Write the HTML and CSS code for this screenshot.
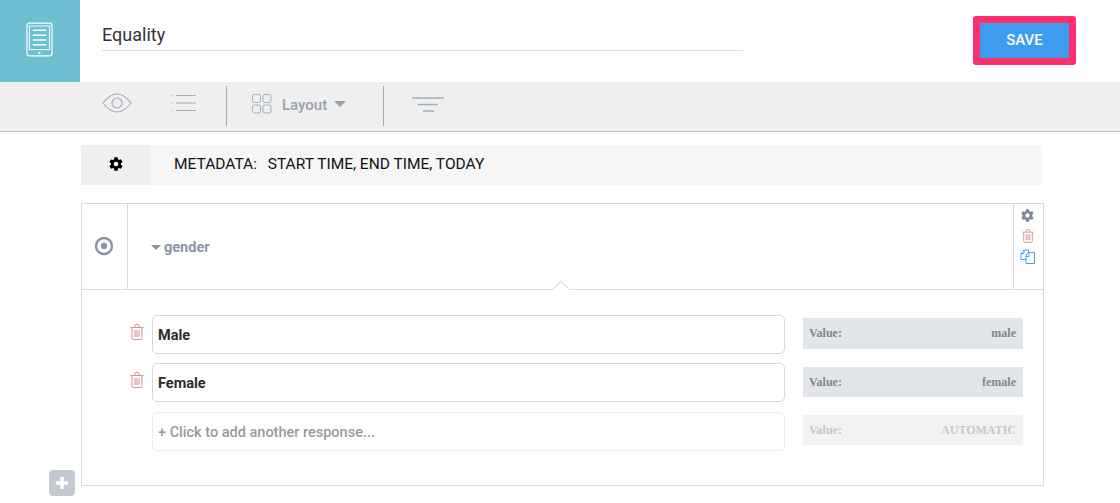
FILE: index.html
```html
<!DOCTYPE html>
<html lang="en">
<head>
  <meta charset="UTF-8">
  <title>Equality</title>
  <link rel="stylesheet" href="styles.css">
</head>
<body>

  <!-- Title bar -->
  <header class="topbar">
    <div class="form-icon">
      <svg width="27" height="35" viewBox="0 0 28 36" fill="none" stroke="#fff">
        <rect x="1" y="1" width="26" height="34" rx="2.5" stroke-width="1.2"/>
        <rect x="3.5" y="4" width="21" height="24.500" stroke-width="1"/>
        <path d="M7 8.500h14M7 13.500h14M7 18.500h14M7 23.500h14" stroke-width="1.600"/>
        <circle cx="14" cy="32" r="1.100" fill="#fff" stroke="none"/>
      </svg>
    </div>
    <div class="title-field">Equality</div>
    <button class="save-button">SAVE</button>
  </header>

  <!-- Toolbar -->
  <nav class="toolbar">
    <svg class="tool-eye" width="30" height="20" viewBox="0 0 30 20" fill="none" stroke="#a3adb6" stroke-width="1.2">
      <path d="M1 10C6 3.500 10 1 15 1s9 2.500 14 9c-5 6.500-9 9-14 9S6 16.500 1 10z"/>
      <circle cx="15" cy="10" r="5"/>
    </svg>
    <svg class="tool-list" width="25" height="18" viewBox="0 0 25 18" fill="none" stroke="#a3adb6">
      <path d="M5 1.500h20M5 9h20M5 16.500h20" stroke-width="1.200"/>
      <path d="M0.500 1.500h2M0.500 9h2M0.500 16.500h2" stroke="#c6ccd2" stroke-width="1.600"/>
    </svg>
    <span class="tool-sep"></span>
    <div class="tool-layout">
      <svg class="layout-icon" width="20" height="20" viewBox="0 0 20 20" fill="none" stroke="#a3adb6" stroke-width="1">
        <rect x="0.500" y="0.500" width="8" height="8" rx="2"/>
        <rect x="11" y="0.500" width="8" height="8" rx="2"/>
        <rect x="0.500" y="11" width="8" height="8" rx="2"/>
        <rect x="11" y="11" width="8" height="8" rx="2"/>
      </svg>
      <span class="layout-label">Layout</span>
      <span class="caret-down"></span>
    </div>
    <span class="tool-sep"></span>
    <svg class="tool-filter" width="32" height="15" viewBox="0 0 32 15" fill="none" stroke="#a3adb6" stroke-width="1.300">
      <path d="M0 1h32M6 7.500h20M11 14h11"/>
    </svg>
  </nav>

  <main class="content">

    <!-- Metadata -->
    <section class="metadata">
      <div class="metadata-icon">
        <svg width="16" height="16" viewBox="0 0 24 24"><use href="#gear"/></svg>
      </div>
      <div class="metadata-text">METADATA: <span class="metadata-fields">START TIME, END TIME, TODAY</span></div>
    </section>

    <!-- Question card -->
    <section class="question">
      <div class="question-head">
        <div class="question-type">
          <svg width="20" height="20" viewBox="0 0 20 20" fill="none">
            <circle cx="10" cy="10" r="8" stroke="#8794a2" stroke-width="2.400"/>
            <circle cx="10" cy="10" r="3.200" fill="#8794a2"/>
          </svg>
        </div>
        <div class="question-name">
          <span class="caret-small"></span>
          <span>gender</span>
        </div>
        <div class="question-actions">
          <svg width="15" height="15" viewBox="0 0 24 24" fill="#7d8893"><use href="#gear"/></svg>
          <svg width="12" height="14" viewBox="0 0 14 16"><use href="#trash"/></svg>
          <svg width="15" height="15" viewBox="0 0 15 15" fill="#fff" stroke="#4aa3ee" stroke-width="1">
            <path d="M1 4.500 4 1h4.500v9.500H1z"/>
            <path d="M6 5.500 8.500 3.500h6v11H6z"/>
            <path d="M1 4.500h3V1M6 7.500h3V4" fill="none"/>
          </svg>
        </div>
        <span class="head-notch"></span>
      </div>

      <div class="responses">
        <div class="response">
          <svg class="response-trash" width="14" height="16" viewBox="0 0 14 16"><use href="#trash"/></svg>
          <div class="response-input">Male</div>
          <div class="response-value"><span>Value:</span><span>male</span></div>
        </div>
        <div class="response">
          <svg class="response-trash" width="14" height="16" viewBox="0 0 14 16"><use href="#trash"/></svg>
          <div class="response-input">Female</div>
          <div class="response-value"><span>Value:</span><span>female</span></div>
        </div>
        <div class="response response-new">
          <div class="response-input">+ Click to add another response...</div>
          <div class="response-value"><span>Value:</span><span>AUTOMATIC</span></div>
        </div>
      </div>
    </section>
  </main>

  <button class="add-question">
    <svg width="14" height="14" viewBox="0 0 14 14"><path d="M7 1v12M1 7h12" stroke="#fff" stroke-width="3.400"/></svg>
  </button>

  <!-- Shared icons -->
  <svg class="icon-defs" width="0" height="0">
    <defs>
      <path id="gear" d="M19.400 13c.04-.33.06-.66.06-1s-.02-.67-.06-1l2.110-1.650a.5.500 0 0 0 .12-.64l-2-3.460a.5.500 0 0 0-.61-.22l-2.490 1a7.300 7.300 0 0 0-1.730-1l-.38-2.650A.49.490 0 0 0 13.930 2h-4a.49.490 0 0 0-.49.42l-.38 2.650c-.61.25-1.170.59-1.690 1l-2.490-1a.5.500 0 0 0-.61.22l-2 3.460a.49.490 0 0 0 .12.64L4.500 11a7.900 7.900 0 0 0 0 2l-2.110 1.650a.5.500 0 0 0-.12.64l2 3.460c.12.22.39.3.61.22l2.490-1c.52.4 1.080.74 1.690 1l.38 2.650c.04.24.25.42.49.42h4c.25 0 .45-.18.49-.42l.38-2.650c.61-.26 1.170-.6 1.730-1l2.490 1c.22.08.49 0 .61-.22l2-3.460a.5.500 0 0 0-.12-.64zM12 15.500a3.500 3.500 0 1 1 0-7 3.500 3.500 0 0 1 0 7z"/>
      <g id="trash" fill="none" stroke="#cf9090" stroke-width="1">
        <path d="M0.500 3.500h13M5 3.500V1.500q0-1 1-1h2q1 0 1 1v2"/>
        <path d="M2 3.500v10.500q0 1.500 1.500 1.500h7q1.500 0 1.500-1.500V3.500"/>
        <path d="M5 6v7M7 6v7M9 6v7"/>
      </g>
    </defs>
  </svg>

</body>
</html>
```

FILE: styles.css
```css
/* Basic styling */
body {
  margin: 0;
  height: 503px;
  overflow: hidden;
  position: relative;
  background-color: white;
  font-family: 'Roboto', 'Liberation Sans', sans-serif;
}
button {
  font-family: inherit;
  cursor: pointer;
}
.icon-defs {
  position: absolute;
}

/* Title bar */
.topbar {
  display: flex;
  height: 82px;
}
.form-icon {
  width: 80px;
  background-color: #6cc0d1;
  display: flex;
  align-items: center;
  justify-content: center;
  padding: 0 2px 3px 0;
  box-sizing: border-box;
}
.title-field {
  width: 641px;
  height: 27px;
  margin: 23px 0 0 22px;
  border-bottom: 1px solid #dcdcdc;
  font-size: 18px;
  line-height: 23px;
  color: #333;
}
.save-button {
  width: 103px;
  height: 49px;
  margin: 16px 0 0 230px;
  border: 7px solid #ff2e6c;
  border-radius: 3px;
  background-color: #3d9bf0;
  color: white;
  font-size: 15px;
  font-weight: 500;
  padding: 0 0 2px;
}

/* Toolbar */
.toolbar {
  display: flex;
  align-items: center;
  height: 49px;
  box-sizing: border-box;
  padding: 0 0 1px 102px;
  background-color: #efefef;
  box-shadow: 0 1px 1px #c4c4c4;
  position: relative;
}
.tool-eye {
  margin: -6px 39px 0 0;
}
.tool-list {
  margin: -7px 30px 0 0;
}
.tool-sep {
  width: 1px;
  height: 40px;
  background-color: #9dabb6;
}
.tool-layout {
  display: flex;
  align-items: center;
  width: 156px;
  padding-left: 25px;
  box-sizing: border-box;
}
.layout-icon {
  margin-top: -5px;
}
.layout-label {
  margin: -3px 0 0 10px;
  font-size: 15px;
  font-weight: 500;
  color: #98a3ad;
}
.caret-down {
  margin-left: 7px;
  margin-top: -5px;
  border-left: 6px solid transparent;
  border-right: 6px solid transparent;
  border-top: 6px solid #98a3ad;
}
.tool-filter {
  margin: -4px 0 0 28px;
}

/* Metadata */
.content {
  padding: 14px 76px 0 81px;
}
.metadata {
  display: flex;
  width: 961px;
  height: 40px;
  background-color: #f6f6f6;
}
.metadata-icon {
  width: 70px;
  background-color: #efefef;
  display: flex;
  align-items: center;
  justify-content: center;
  padding-bottom: 2px;
  box-sizing: border-box;
}
.metadata-text {
  margin-left: 23px;
  font-size: 15.5px;
  line-height: 38px;
  color: #111;
}
.metadata-fields {
  margin-left: 7px;
}

/* Question card */
.question {
  margin-top: 18px;
  width: 963px;
  height: 283px;
  box-sizing: border-box;
  border: 1px solid #d9d9df;
}
.question-head {
  display: flex;
  height: 85px;
  border-bottom: 1px solid #d9d9df;
  position: relative;
}
.question-type {
  width: 46px;
  padding: 0 1px 2px 0;
  box-sizing: border-box;
  border-right: 1px solid #d9d9df;
  display: flex;
  align-items: center;
  justify-content: center;
}
.question-name {
  flex: 1;
  display: flex;
  align-items: center;
  gap: 3px;
  padding: 1px 0 0 23px;
  font-size: 14.5px;
  font-weight: 700;
  color: #8a95a1;
}
.caret-small {
  border-left: 5px solid transparent;
  border-right: 5px solid transparent;
  border-top: 5px solid #8a95a1;
}
.question-actions {
  width: 30px;
  padding: 4px 2px 0 0;
  box-sizing: border-box;
  border-left: 1px solid #d9d9df;
  display: flex;
  flex-direction: column;
  align-items: center;
  gap: 6px;
}
.head-notch {
  position: absolute;
  left: 473px;
  top: 79px;
  width: 11px;
  height: 11px;
  background-color: white;
  border-left: 1px solid #d9d9df;
  border-top: 1px solid #d9d9df;
  transform: rotate(45deg);
}

/* Responses */
.responses {
  padding: 25px 20px 0 48px;
  display: flex;
  flex-direction: column;
  gap: 9px;
}
.response {
  display: flex;
  align-items: flex-start;
  position: relative;
  padding-left: 22px;
}
.response-trash {
  position: absolute;
  left: 0;
  top: 9px;
}
.response-input {
  width: 633px;
  height: 39px;
  box-sizing: border-box;
  border: 1px solid #d9d9df;
  border-radius: 5px;
  padding-left: 5px;
  font-size: 14.5px;
  font-weight: 700;
  line-height: 39px;
  color: #2b2b2b;
}
.response-value {
  width: 220px;
  height: 30px;
  margin: 4px 0 0 18px;
  padding: 0 7px 0 6px;
  box-sizing: border-box;
  background-color: #e2e5e9;
  display: flex;
  justify-content: space-between;
  align-items: center;
  font-family: 'Liberation Serif', serif;
  font-size: 12px;
  font-weight: 700;
  color: #85858c;
}
.response:first-child .response-value {
  height: 31px;
  margin-top: 3px;
}
.response-new {
  margin-top: 1px;
}
.response-new .response-input {
  border-color: #eeeef0;
  color: #9a9a9a;
  font-weight: 500;
}
.response-new .response-value {
  margin-top: 3px;
  background-color: #f1f2f4;
  color: #c6c8ca;
}

/* Add question button */
.add-question {
  position: absolute;
  left: 49px;
  top: 470px;
  width: 26px;
  height: 26px;
  border: none;
  border-radius: 4px;
  padding: 0;
  background-color: #c2c9d0;
  display: flex;
  align-items: center;
  justify-content: center;
}
```
